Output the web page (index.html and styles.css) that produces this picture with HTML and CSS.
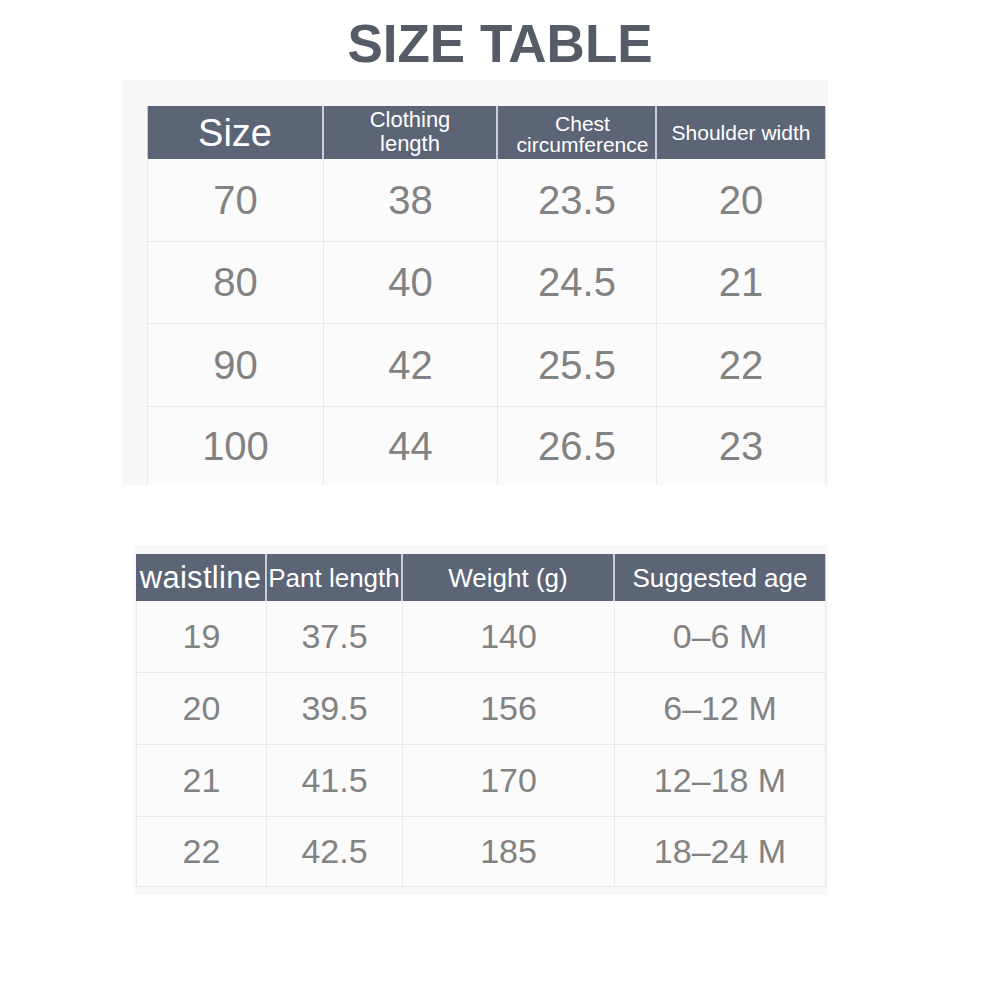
FILE: index.html
```html
<!DOCTYPE html>
<html lang="en">
<head>
<meta charset="utf-8">
<title>Size Table</title>
<link rel="stylesheet" href="styles.css">
</head>
<body>
<div class="page">
  <h1 class="title">SIZE TABLE</h1>

  <section class="panel panel-top">
    <div class="grid grid-top">
      <div class="th th-size">Size</div>
      <div class="th th-cloth">Clothing<br>length</div>
      <div class="th th-chest">Chest<br>circumference</div>
      <div class="th th-last">Shoulder width</div>

      <div class="td first">70</div><div class="td">38</div><div class="td">23.5</div><div class="td">20</div>
      <div class="td first">80</div><div class="td">40</div><div class="td">24.5</div><div class="td">21</div>
      <div class="td first">90</div><div class="td">42</div><div class="td">25.5</div><div class="td">22</div>
      <div class="td first last-row">100</div><div class="td last-row">44</div><div class="td last-row">26.5</div><div class="td last-row">23</div>
    </div>
  </section>

  <section class="panel panel-bottom">
    <div class="grid grid-bottom">
      <div class="th th-waist">waistline</div>
      <div class="th th-small">Pant length</div>
      <div class="th th-small">Weight (g)</div>
      <div class="th th-small th-last">Suggested age</div>

      <div class="td first">19</div><div class="td">37.5</div><div class="td">140</div><div class="td">0–6 M</div>
      <div class="td first">20</div><div class="td">39.5</div><div class="td">156</div><div class="td">6–12 M</div>
      <div class="td first">21</div><div class="td">41.5</div><div class="td">170</div><div class="td">12–18 M</div>
      <div class="td first">22</div><div class="td">42.5</div><div class="td">185</div><div class="td">18–24 M</div>
    </div>
  </section>
</div>
</body>
</html>
```

FILE: styles.css
```css
* { box-sizing: border-box; }

html, body {
  margin: 0;
  padding: 0;
  background: #ffffff;
}

body {
  font-family: "Liberation Sans", Arial, sans-serif;
  width: 1000px;
  height: 1000px;
  overflow: hidden;
}

.page {
  display: flex;
  flex-direction: column;
}

.title {
  margin: 0;
  padding-top: 17px;
  font-size: 53px;
  line-height: 53px;
  font-weight: 700;
  letter-spacing: 0;
  text-align: center;
  color: #555b67;
}

.panel {
  background: #f8f8f9;
}

.panel-top {
  margin-top: 10px;
  margin-left: 122px;
  width: 706px;
  padding: 26px 2px 0 25px;
}

.panel-bottom {
  margin-top: 60px;
  margin-left: 134px;
  width: 694px;
  padding: 9px 2px 8px 2px;
}

.grid {
  display: grid;
}

.grid-top {
  grid-template-columns: 177px 174px 159px 169px;
  grid-template-rows: 53px 83px 82px 83px 78px;
}

.grid-bottom {
  grid-template-columns: 131px 136px 212px 211px;
  grid-template-rows: 47px 72px 72px 72px 70px;
}

.th {
  background: #5b6576;
  color: #ffffff;
  display: flex;
  align-items: center;
  justify-content: center;
  text-align: center;
  font-size: 21px;
  line-height: 22px;
  border-right: 2px solid #cbcfd5;
}

.th-last {
  border-right: 1px solid #cbcfd5;
}

.th-size {
  font-size: 38px;
  line-height: 40px;
  border-left: 1px solid #c3c7cd;
}

.th-cloth {
  font-size: 22px;
  line-height: 24px;
  padding-bottom: 2px;
}

.th-chest {
  padding-left: 12px;
  line-height: 21px;
  padding-top: 2px;
}

.th-waist {
  font-size: 31px;
  line-height: 32px;
  letter-spacing: 0.3px;
  white-space: nowrap;
  overflow: hidden;
}

.th-small {
  font-size: 26px;
  line-height: 28px;
  white-space: nowrap;
}

.td {
  background: #fbfbfb;
  color: #828282;
  display: flex;
  align-items: center;
  justify-content: center;
  border-right: 1px solid #e8e8ea;
  border-bottom: 1px solid #e8e8ea;
}

.td.first {
  border-left: 1px solid #e8e8ea;
}

.td.last-row {
  border-bottom: none;
}

.grid-top .td {
  font-size: 40px;
}

.grid-bottom .td {
  font-size: 34px;
}
```
